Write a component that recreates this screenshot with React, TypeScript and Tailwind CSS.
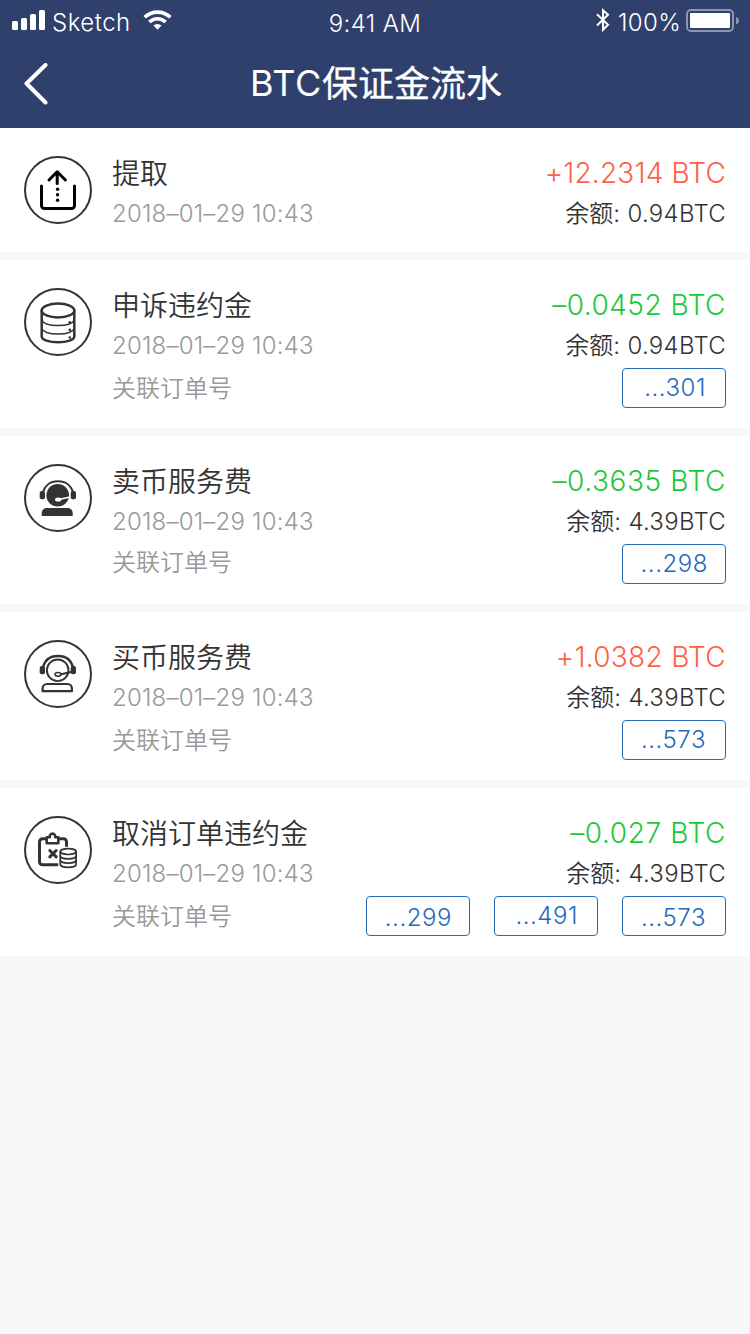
import type { ReactNode } from "react";

type OrderLink = { label: string; className: string };

type Entry = {
  title: string;
  amount: string;
  amountClass: string;
  balance: string;
  icon: ReactNode;
  labelClass?: string;
  orders?: OrderLink[];
};

function Badge({ children }: { children: ReactNode }) {
  return (
    <svg
      className="mt-1 size-[68px] shrink-0"
      viewBox="0 0 68 68"
      fill="none"
      stroke="#333333"
      strokeWidth="2"
      strokeLinecap="round"
      strokeLinejoin="round"
    >
      <circle cx="34" cy="34" r="33" />
      {children}
    </svg>
  );
}

const withdrawIcon = (
  <Badge>
    <g stroke="#000000" strokeWidth="3">
      <path d="M17.5 30v19.500a3 3 0 0 0 3 3h27a3 3 0 0 0 3-3V30" />
      <path d="M33.200 27.500V16M25 24l8.200-8.200 8.200 8.200" />
    </g>
    <g fill="#000000" stroke="none">
      <circle cx="33.600" cy="33.300" r="1.700" />
      <circle cx="33.600" cy="38.800" r="1.700" />
      <circle cx="33.600" cy="44.300" r="1.700" />
    </g>
  </Badge>
);

const databaseIcon = (
  <Badge>
    <ellipse cx="34" cy="22.500" rx="16.300" ry="7" strokeWidth="2.500" />
    <path
      d="M17.700 22.500v26c0 3.400 7.300 5.800 16.300 5.800s16.300-2.400 16.300-5.800v-26"
      strokeWidth="2.500"
    />
    <path
      d="M17.700 32c1.500 3.600 8.500 5.600 16.300 5.600S48.800 35.600 50.300 32M17.700 40.500c1.500 3.600 8.500 5.600 16.300 5.600s14.800-2 16.300-5.600"
      strokeWidth="1.500"
    />
    <g fill="#333333" stroke="none">
      <circle cx="45.800" cy="34.300" r="1.300" />
      <circle cx="45.800" cy="41.900" r="1.300" />
      <circle cx="45.800" cy="49.500" r="1.300" />
    </g>
  </Badge>
);

const agentSolidIcon = (
  <Badge>
    <circle cx="33.700" cy="31.300" r="11.300" fill="#333333" stroke="none" />
    <path d="M18.800 29.500C20.500 21.500 26.500 17.300 34 17.300S47.500 21.500 49.200 29.500" />
    <rect x="15.700" y="27" width="5.300" height="8.300" rx="2" fill="#333333" stroke="none" />
    <rect x="46.700" y="27" width="5.300" height="8.300" rx="2" fill="#333333" stroke="none" />
    <path d="M36 35.300l10-2.300" stroke="#ffffff" strokeWidth="1.600" />
    <ellipse cx="34.200" cy="35.500" rx="3.200" ry="2" fill="#ffffff" stroke="none" />
    <path d="M17.700 52v-3a5 5 0 0 1 5-5h21a5 5 0 0 1 5 5v3z" fill="#333333" stroke="none" />
  </Badge>
);

const agentOutlineIcon = (
  <Badge>
    <circle cx="33.700" cy="30.300" r="10.800" strokeWidth="1.900" />
    <path d="M18.800 28.500C20.500 20 26.500 16 34 16S47.500 20 49.200 28.500" strokeWidth="2.400" />
    <rect x="15.700" y="26" width="5.300" height="8.300" rx="2" fill="#333333" stroke="none" />
    <rect x="46.700" y="26" width="5.300" height="8.300" rx="2" fill="#333333" stroke="none" />
    <path d="M37 34.200l10-2.200" strokeWidth="2.200" />
    <ellipse cx="34" cy="34.300" rx="3" ry="1.900" fill="#ffffff" strokeWidth="1.500" />
    <path d="M18.600 51.200v-2.700a4.500 4.500 0 0 1 4.500-4.500h20.300a4.500 4.500 0 0 1 4.500 4.500v2.700z" strokeWidth="2.200" />
  </Badge>
);

const cancelIcon = (
  <Badge>
    <path
      d="M22 22.700h-3.500a3 3 0 0 0-3 3v20a3 3 0 0 0 3 3h15.800M35 22.700h4.500a3 3 0 0 1 3 3v5"
      strokeWidth="3"
      strokeLinecap="butt"
    />
    <path d="M22.700 21.200h3.100a2.800 2.800 0 1 1 5.400 0h3.100v6H22.700z" strokeWidth="2.600" />
    <path d="M25.800 34.500l6.400 6.400M32.200 34.500l-6.400 6.400" strokeWidth="3" />
    <g strokeWidth="1.700">
      <ellipse cx="44.200" cy="35.600" rx="7.900" ry="2.900" />
      <path d="M36.300 35.600v12.800c0 1.600 3.500 2.900 7.900 2.900s7.900-1.300 7.900-2.900V35.600" />
      <path d="M36.300 40c0 1.600 3.500 2.900 7.900 2.900s7.900-1.300 7.900-2.900M36.300 44.300c0 1.600 3.500 2.900 7.900 2.900s7.900-1.300 7.900-2.900" />
    </g>
  </Badge>
);

const entries: Entry[] = [
  {
    title: "提取",
    amount: "+12.2314 BTC",
    amountClass: "text-[#ff6147] tracking-[0.18px]",
    balance: "0.94BTC",
    icon: withdrawIcon,
  },
  {
    title: "申诉违约金",
    amount: "–0.0452 BTC",
    amountClass: "text-[#1ec83a] tracking-[0.5px]",
    balance: "0.94BTC",
    icon: databaseIcon,
    orders: [{ label: "...301", className: "pr-[19px]" }],
  },
  {
    title: "卖币服务费",
    amount: "–0.3635 BTC",
    amountClass: "text-[#1ec83a] tracking-[0.6px]",
    balance: "4.39BTC",
    icon: agentSolidIcon,
    labelClass: "pb-1",
    orders: [{ label: "...298", className: "pr-[17px]" }],
  },
  {
    title: "买币服务费",
    amount: "+1.0382 BTC",
    amountClass: "text-[#ff6147] tracking-[0.3px]",
    balance: "4.39BTC",
    icon: agentOutlineIcon,
    orders: [{ label: "...573", className: "pr-[19px]" }],
  },
  {
    title: "取消订单违约金",
    amount: "–0.027 BTC",
    amountClass: "text-[#1ec83a] tracking-[0.6px]",
    balance: "4.39BTC",
    icon: cancelIcon,
    orders: [
      { label: "...299", className: "pr-[17px] pt-[3px]" },
      { label: "...491", className: "pr-[19px]" },
      { label: "...573", className: "pr-[19px] pt-[3px]" },
    ],
  },
];

function EntryCard({ entry }: { entry: Entry }) {
  return (
    <li className="flex gap-5 bg-white px-6 pt-6">
      {entry.icon}
      <div className="flex grow flex-col gap-0.5">
        <div className="flex h-10 items-center justify-between text-[28px]">
          <h2 className="pt-[3px] font-[350] text-[#333333]">{entry.title}</h2>
          <span className={`pt-px font-light ${entry.amountClass}`}>{entry.amount}</span>
        </div>
        <div className="flex h-10 items-center justify-between text-2xl font-light">
          <time className="tracking-[0.2px] text-[#999999]">2018–01–29 10:43</time>
          <span className="flex items-center whitespace-pre text-[#333333]">
            <span className="font-[350]">余额</span>
            <span className="tracking-[0.28px]">: {entry.balance}</span>
          </span>
        </div>
        {entry.orders ? (
          <div className="mb-5 flex h-10 items-center justify-between text-2xl font-light">
            <span className={`pt-0.5 font-[350] text-[#999999] ${entry.labelClass ?? ""}`}>关联订单号</span>
            <div className="flex gap-6">
              {entry.orders.map((order, index) => (
                <a
                  key={index}
                  className={`flex h-10 w-[104px] items-center justify-end rounded-[4px] border border-[#2768b9] tracking-[0.55px] text-[#2768b9] ${order.className}`}
                >
                  {order.label}
                </a>
              ))}
            </div>
          </div>
        ) : (
          <div className="h-4" />
        )}
      </div>
    </li>
  );
}

function StatusBar() {
  return (
    <div className="grid h-10 grid-cols-3 text-2xl leading-10 font-light">
      <div className="flex h-10 pl-3">
        <svg className="mt-2.5 h-5 w-[33px]" viewBox="0 0 33 20" fill="#ffffff">
          <rect x="0" y="11" width="6" height="9" rx="1.500" />
          <rect x="9" y="8" width="6" height="12" rx="1.500" />
          <rect x="18" y="4" width="6" height="16" rx="1.500" />
          <rect x="27" y="0" width="6" height="20" rx="1.500" />
        </svg>
        <span className="mt-[3px] ml-[7px] w-[78px] tracking-[0.5px]">Sketch</span>
        <svg className="mt-2.5 ml-[13px] h-5 w-[29px]" viewBox="0 0 30 20" fill="none" stroke="#ffffff" strokeWidth="3.800">
          <path d="M1.700 7.200a19 19 0 0 1 26.600 0" />
          <path d="M6.600 12.100a12 12 0 0 1 16.800 0" />
          <path d="M15 20l-4.200-4.200a6 6 0 0 1 8.400 0z" fill="#ffffff" stroke="none" />
        </svg>
      </div>
      <span className="mt-1 h-10 text-center tracking-[0.4px]">9:41 AM</span>
      <div className="flex h-10 justify-end pr-[11px]">
        <svg className="mt-2 h-6 w-4" viewBox="0 0 16 24" fill="none" stroke="#ffffff" strokeWidth="2">
          <path d="M2 6.300l11 10.500-5 5V2.300l5 4.500L2 17.500" />
        </svg>
        <span className="mt-[3px] ml-[7px] w-[62px] tracking-[0.4px]">100%</span>
        <svg className="mt-[9px] ml-[6px] -mr-px h-[23px] w-[54px]" viewBox="0 0 54 23">
          <rect x="1" y="1" width="46" height="21" rx="4" fill="none" stroke="#ffffff" strokeOpacity="0.450" strokeWidth="2" />
          <rect x="4" y="4" width="40" height="15" rx="1" fill="#ffffff" />
          <path d="M50 8c4 1 4 6.500 0 7.500z" fill="#ffffff" fillOpacity="0.450" />
        </svg>
      </div>
    </div>
  );
}

export default function App() {
  return (
    <main className="min-h-[1334px] w-[750px] bg-[#f7f7f7] font-['Inter','Noto_Sans_CJK_SC',sans-serif]">
      <header className="h-32 bg-[#2f406c] text-white">
        <StatusBar />
        <div className="grid h-[88px] grid-cols-[1fr_auto_1fr] items-center">
          <svg className="ml-6 h-[42px] w-6" viewBox="0 0 24 42" fill="none" stroke="#ffffff" strokeWidth="4" strokeLinecap="round" strokeLinejoin="round">
            <path d="M21.500 2L2.500 20.500l19 19" />
          </svg>
          <h1 className="flex items-center pb-0.5 pl-0.5 text-4xl font-normal">
            <span className="tracking-[0.6px]">BTC</span>
            <span className="pt-px [-webkit-text-stroke:0.3px_white]">保证金流水</span>
          </h1>
        </div>
      </header>
      <ul className="flex flex-col gap-2">
        {entries.map((entry) => (
          <EntryCard key={entry.title} entry={entry} />
        ))}
      </ul>
    </main>
  );
}
